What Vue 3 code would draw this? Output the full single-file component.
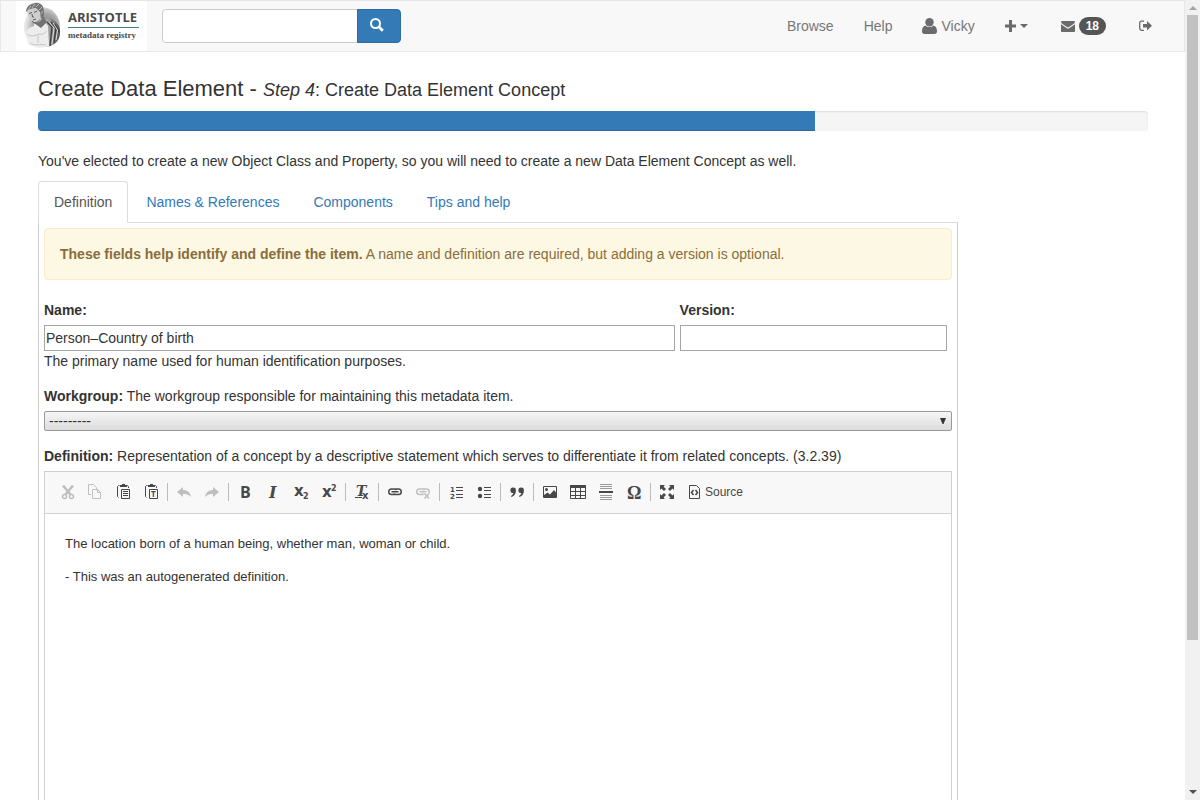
<script setup>
import { ref } from 'vue'

const query = ref('')
const name = ref('Person–Country of birth')
const version = ref('')
const workgroup = ref('')
const progress = 70

const tabs = ['Definition', 'Names & References', 'Components', 'Tips and help']
const activeTab = ref('Definition')

const glyph = (text, x, y, size, kind = 'sans') => `<text class="glyph ${kind}" x="${x}" y="${y}" font-size="${size}">${text}</text>`
const clip = '<path d="M4.500 1.500H3.500L2.500 2.500V12.500L3.500 13.500M11.500 1.500H12.500L13.500 2.500V4" fill="none" stroke="currentColor"/><path d="M5 1h2V0h3v1h2v2H5z"/><path d="M6.500 5.500h8v9h-8z" fill="#f8f8f8" stroke="currentColor"/>'
const chain = '<g fill="none" stroke="currentColor" stroke-width="1.500"><path d="M7.500 10.500H4.500a2.500 2.500 0 0 1 0-5.500h3a2.500 2.500 0 0 1 2 1M8.500 5H11.500a2.500 2.500 0 0 1 0 5.500h-3a2.500 2.500 0 0 1-2-1M4.500 7.750h7"/></g>'

const groups = [
  [
    { label: 'Cut', off: true, svg: '<g fill="none" stroke="currentColor"><path d="M4 1.500L11.500 10.500M14 1.500L6.500 10.500" stroke-width="2.600"/><circle cx="5.500" cy="12.500" r="2" stroke-width="1.500"/><circle cx="12.500" cy="12.500" r="2" stroke-width="1.500"/></g>' },
    { label: 'Copy', off: true, svg: '<g fill="none" stroke="currentColor"><path d="M4 10.500H1.500V0.500H6.500L9.500 3.500V5"/><path d="M5.500 5.500H10.500L13.500 8.500V14.500H5.500ZM10.500 5.500V8.500H13.500"/></g>' },
    { label: 'Paste', svg: clip + '<path d="M8 7.500h5M8 9.500h5M8 11.500h5" stroke="currentColor"/>' },
    { label: 'Paste as plain text', svg: clip + glyph('T', 8, 13, 8) }
  ],
  [
    { label: 'Undo', off: true, svg: '<path d="M1 8L7 3V6C11 6 14.500 8.500 15 13C12.500 10.500 10 10 7 10V13Z"/>' },
    { label: 'Redo', off: true, svg: '<path d="M15 8L9 3V6C5 6 1.500 8.500 1 13C3.500 10.500 6 10 9 10V13Z"/>' }
  ],
  [
    { label: 'Bold', svg: glyph('B', 3, 14, 16) },
    { label: 'Italic', svg: glyph('I', 4, 14, 16, 'serif slanted') },
    { label: 'Subscript', svg: glyph('x', 1, 12, 15, 'wide') + glyph('2', 10, 15, 8, 'wide') },
    { label: 'Superscript', svg: glyph('x', 1, 13, 15, 'wide') + glyph('2', 10, 7, 8, 'wide') }
  ],
  [
    { label: 'Remove format', svg: glyph('T', 2, 12, 14, 'serif slanted') + '<path d="M1 13.500h7" stroke="currentColor"/>' + glyph('x', 8, 15, 10, 'wide') }
  ],
  [
    { label: 'Link', svg: chain },
    { label: 'Unlink', off: true, svg: chain + '<circle cx="12" cy="12" r="3.500" fill="#f8f8f8"/><path d="M9.500 9.500l4.500 5M14 9.500l-4.500 5" stroke="currentColor" stroke-width="1.700"/>' }
  ],
  [
    { label: 'Numbered list', svg: glyph('1', 2, 8, 7, 'wide') + glyph('2', 2, 15, 7, 'wide') + '<path d="M8 3.500h7M8 6.500h7M8 10.500h7M8 13.500h7" stroke="currentColor"/>' },
    { label: 'Bulleted list', svg: '<circle cx="4" cy="5" r="2.200"/><circle cx="4" cy="12" r="2.200"/><path d="M8 3.500h7M8 6.500h7M8 10.500h7M8 13.500h7" stroke="currentColor"/>' }
  ],
  [
    { label: 'Block quote', svg: '<path d="M4 3.500a2.800 2.800 0 0 1 2.900 3C6.900 9.500 5.500 12 2.500 13L2 12C3.500 11.200 4.200 10 4.300 9A2.750 2.750 0 0 1 4 3.500ZM12 3.500a2.800 2.800 0 0 1 2.900 3C14.900 9.500 13.500 12 10.500 13L10 12C11.500 11.200 12.200 10 12.300 9A2.750 2.750 0 0 1 12 3.500Z"/>' }
  ],
  [
    { label: 'Image', svg: '<path d="M1.500 2.500h13v11h-13z" fill="none" stroke="currentColor"/><circle cx="4.500" cy="5.500" r="1.500"/><path d="M2 13V11L5.500 8.500L8 10.500L12 6L14 8.500V13Z"/>' },
    { label: 'Table', svg: '<path d="M0 1h16v3H0z"/><path d="M.5 1.500h15v13H.5zM0 7.500h16M0 11.500h16M5.500 3v12M10.500 3v12" fill="none" stroke="currentColor"/>' },
    { label: 'Horizontal line', svg: '<path d="M2 .5h12M2 2.500h12M2 4.500h12M2 11.500h12M2 13.500h12M2 15.500h12" stroke="#9a9a9a"/><path d="M1 7h14v2H1z"/>' },
    { label: 'Special character', svg: glyph('Ω', 1, 15, 18, 'times') }
  ],
  [
    { label: 'Maximize', svg: '<path d="M1 1h5L4.500 2.500L7 5L5 7L2.500 4.500L1 6ZM15 1h-5l1.500 1.500L9 5l2 2l2.500-2.500L15 6ZM1 15h5l-1.500-1.500L7 11L5 9L2.500 11.500L1 10ZM15 15h-5l1.500-1.500L9 11l2-2l2.500 2.500L15 10Z"/>' },
    { label: 'Source', text: true, svg: '<path d="M2.500 1.500H9.500L12.500 4.500V14.500H2.500Z" fill="none" stroke="currentColor"/><path d="M6.500 6L4.500 8.500L6.500 11M8.500 6L10.500 8.500L8.500 11" fill="none" stroke="currentColor" stroke-width="1.600"/>' }
  ]
]
</script>

<template>
  <div class="window">
    <div class="page">
      <nav class="navbar">
        <a class="brand" href="#" aria-label="Aristotle metadata registry">
          <svg class="bust" viewBox="0 0 40 48" aria-hidden="true">
            <defs>
              <radialGradient id="halo" cx=".6" cy=".5" r=".55">
                <stop offset="0" stop-color="#777" />
                <stop offset=".6" stop-color="#a5a5a5" />
                <stop offset="1" stop-color="#e6e6e6" />
              </radialGradient>
              <linearGradient id="cloak" x1="0" x2="1">
                <stop offset="0" stop-color="#d0d0d0" />
                <stop offset=".5" stop-color="#8a8a8a" />
                <stop offset="1" stop-color="#505050" />
              </linearGradient>
            </defs>
            <ellipse cx="20" cy="25" rx="18" ry="20" fill="url(#halo)" />
            <path d="M22 18L29 16C35 20 39 25 38 31C38 39 32 44 24 45L21 34Z" fill="url(#cloak)" />
            <path d="M12 22L21 18L26 24L27 44C20 47 12 46 6 42L4 33C4 28 8 25 12 24Z" fill="#ededed" />
            <path d="M5 32C8 35 13 34 17 32C20 33 23 31 25 29M16 33L16 41M8 41C12 44 19 42 24 43" fill="none" stroke="#c4c4c4" stroke-width="1" />
            <path d="M25 20L30 25L28 44M29 20L34 26L32 41M33 22L37 30" fill="none" stroke="#3c3c3c" stroke-width="1.200" />
            <path d="M27 20L32 26L30 42M31 21L35.500 28L34 38" fill="none" stroke="#dcdcdc" stroke-width="1" />
            <path d="M12 21L21 14L25 20L19 26Z" fill="#727272" />
            <path d="M5 9C7 5 12 3 17 4L21 10L20 17L17 20C13 21.500 10 20.500 9 17L6 14Z" fill="#cfcfcf" />
            <path d="M4 10C4 5 7 2 13 1C19 0 21.500 4 22 9C22.500 13 21.500 16 19 17L18 10L14 6C10 6 7 7 4 10Z" fill="#747474" />
            <path d="M6 8L9 4M10 6L13 2M14 5L17 2M17 8L20 5M19 12L21 9" stroke="#b8b8b8" stroke-width="1" />
            <path d="M7 11.500L10 10.500M12 10.500L15 9M10 12L10.500 15L12 15M11 18L14 17M10 19.500C13 21.500 16 20.500 18 17.500" fill="none" stroke="#5a5a5a" stroke-width="1" />
          </svg>
          <span class="wordmark">
            <span class="wordmark-top">ARISTOTLE</span>
            <span class="wordmark-sub">metadata registry</span>
          </span>
        </a>
        <form class="search" role="search" @submit.prevent>
          <input v-model="query" type="text" aria-label="Search" />
          <button type="submit" aria-label="Search">
            <svg width="14" height="14" viewBox="0 0 14 14"><circle cx="5.500" cy="5.500" r="4.500" fill="none" stroke="#fff" stroke-width="2" /><path d="M8.800 8.800L12.800 12.800" stroke="#fff" stroke-width="2.800" /></svg>
          </button>
        </form>
        <div class="links">
          <a href="#">Browse</a>
          <a href="#">Help</a>
          <a href="#">
            <svg width="15" height="16" viewBox="0 0 15 16"><circle cx="7.500" cy="4.200" r="4.200" /><path d="M3.500 7.500C1 8 0 10.500 0 13.200C0 15 1 16 2.500 16H12.500C14 16 15 15 15 13.200C15 10.500 14 8 11.500 7.500C9.500 9.600 5.500 9.600 3.500 7.500Z" /></svg>
            Vicky
          </a>
          <a href="#" aria-label="Create">
            <svg width="11" height="12" viewBox="0 0 11 12"><path d="M4 0h3v4.500h4v3H7V12H4V7.500H0v-3h4z" /></svg>
            <svg width="8" height="4" viewBox="0 0 8 4"><path d="M0 0h8L4 4z" /></svg>
          </a>
          <a href="#" class="inbox" aria-label="Messages: 18">
            <svg width="14" height="11" viewBox="0 0 14 11"><path d="M0 1Q0 0 1 0H13Q14 0 14 1Q14 2 12.500 3L8 6Q7 6.700 6 6L1.500 3Q0 2 0 1Z" /><path d="M0 3.200L5.500 7Q7 8 8.500 7L14 3.200V10Q14 11 13 11H1Q0 11 0 10Z" /></svg>
            <span class="badge">18</span>
          </a>
          <a href="#" aria-label="Log out">
            <svg width="13" height="12" viewBox="0 0 13 12"><path d="M5 1.200H2.500Q.7 1.200.7 3V8.500Q.7 10.300 2.500 10.300H5" fill="none" stroke="currentColor" stroke-width="1.300" /><path d="M4 4h4V1L13 5.700L8 10.500V7.500H4Z" /></svg>
          </a>
        </div>
      </nav>

      <main class="content">
        <h1>Create Data Element - <small><em>Step 4</em>: Create Data Element Concept</small></h1>
        <div class="progress" role="progressbar" :aria-valuenow="progress" aria-valuemin="0" aria-valuemax="100">
          <div class="bar" :style="{ width: progress + '%' }"></div>
        </div>
        <p class="intro">You've elected to create a new Object Class and Property, so you will need to create a new Data Element Concept as well.</p>

        <div class="row">
          <div class="column">
            <div class="tabs">
              <a v-for="tab in tabs" :key="tab" href="#" :class="{ active: tab === activeTab }" @click.prevent="activeTab = tab">{{ tab }}</a>
            </div>
            <div class="pane">
              <div class="alert"><strong>These fields help identify and define the item.</strong> A name and definition are required, but adding a version is optional.</div>

              <div class="fields">
                <div class="field">
                  <label for="name">Name:</label>
                  <input id="name" v-model="name" type="text" />
                  <span>The primary name used for human identification purposes.</span>
                </div>
                <div class="field">
                  <label for="version">Version:</label>
                  <input id="version" v-model="version" type="text" />
                </div>
              </div>

              <div class="group">
                <div class="caption"><label for="workgroup">Workgroup:</label> The workgroup responsible for maintaining this metadata item.</div>
                <div class="select">
                  <select id="workgroup" v-model="workgroup">
                    <option value="">---------</option>
                  </select>
                  <svg width="6" height="7" viewBox="0 0 6 7"><path d="M0 0h6L3.500 6h-1z" /></svg>
                </div>
              </div>

              <div class="group">
                <div class="caption"><label id="definition-label">Definition:</label> Representation of a concept by a descriptive statement which serves to differentiate it from related concepts. (3.2.39)</div>
                <div class="editor">
                  <div class="toolbar">
                    <div v-for="(group, i) in groups" :key="i" class="tool-group">
                      <button v-for="tool in group" :key="tool.label" type="button" :aria-label="tool.label" :class="{ off: tool.off }" :disabled="tool.off">
                        <svg width="16" height="16" viewBox="0 0 16 16" aria-hidden="true" v-html="tool.svg"></svg>
                        <span v-if="tool.text">{{ tool.label }}</span>
                      </button>
                    </div>
                  </div>
                  <div class="document" contenteditable="true" role="textbox" aria-multiline="true" aria-labelledby="definition-label">
                    <p>The location born of a human being, whether man, woman or child.</p>
                    <p>- This was an autogenerated definition.</p>
                  </div>
                </div>
              </div>
            </div>
          </div>
        </div>
      </main>
    </div>
    <div class="scrollbar" aria-hidden="true">
      <svg width="8" height="4" viewBox="0 0 8 4"><path d="M4 0L8 4H0z" fill="#a3a3a3" /></svg>
      <div class="track"><div class="thumb"></div></div>
      <svg width="8" height="4" viewBox="0 0 8 4"><path d="M0 0h8L4 4z" fill="#505050" /></svg>
    </div>
  </div>
</template>

<style>
body {
  margin: 0;
  background: #fff;
}
</style>

<style scoped>
* {
  box-sizing: border-box;
}
.window {
  display: flex;
  height: 100vh;
  overflow: hidden;
  font: 14px/20px "Liberation Sans", Arial, sans-serif;
  color: #333;
}
.page {
  flex: 1;
  min-width: 0;
  overflow: hidden;
}
a {
  color: #337ab7;
  text-decoration: none;
}
svg {
  display: block;
  flex: none;
  fill: currentColor;
}
input, button, select {
  font: inherit;
  color: inherit;
  margin: 0;
}
.navbar {
  display: flex;
  align-items: center;
  height: 52px;
  padding: 0 17px 0 15px;
  border: 1px solid #e7e7e7;
  background: #f8f8f8;
}
.brand {
  display: flex;
  align-items: center;
  gap: 6px;
  height: 50px;
  padding: 0 8px 0 6px;
  background: #fff;
  color: #4a4a4a;
}
.bust {
  width: 40px;
  height: 48px;
}
.wordmark {
  display: flex;
  flex-direction: column;
  width: 71px;
}
.wordmark-top {
  border-bottom: 1px solid #3f7f78;
  padding-bottom: 1px;
  font: bold 13px/17px "Open Sans", sans-serif;
}
.wordmark-sub {
  font: bold 9px/15px "Liberation Serif", serif;
  white-space: nowrap;
}
.search {
  display: flex;
  margin-left: 15px;
}
.search input {
  width: 196px;
  height: 34px;
  padding: 6px 12px;
  border: 1px solid #ccc;
  border-radius: 4px 0 0 4px;
  background: #fff;
}
.search button {
  display: flex;
  align-items: flex-start;
  width: 44px;
  height: 34px;
  margin-left: -1px;
  padding: 8px 12px;
  border: 1px solid #2e6da4;
  border-radius: 0 4px 4px 0;
  background: #337ab7;
}
.links {
  display: flex;
  margin-left: auto;
}
.links a {
  display: flex;
  align-items: center;
  gap: 4px;
  height: 50px;
  padding: 0 15px;
  color: #777;
}
.links svg {
  color: #6b6b6b;
}
.links .inbox {
  padding: 0 18px;
}
.badge {
  padding: 3px 7px;
  border-radius: 10px;
  background: #555;
  color: #fff;
  font-size: 12px;
  font-weight: bold;
  line-height: 12px;
}
.content {
  padding: 24px 37px 0 38px;
}
h1 {
  margin: 0 0 8px;
  font-size: 22px;
  font-weight: normal;
  line-height: 26px;
}
h1 small {
  font-size: 18px;
}
.progress {
  height: 20px;
  border-radius: 4px;
  overflow: hidden;
  background: #f5f5f5;
  box-shadow: inset 0 1px 2px rgba(0, 0, 0, .1);
}
.bar {
  height: 100%;
  background: #337ab7;
  box-shadow: inset 0 -1px 0 rgba(0, 0, 0, .15);
}
.intro {
  margin: 20px 0 10px;
}
.row {
  margin: 0 -15px;
}
.column {
  width: 83.3333%;
  padding: 0 15px;
}
.tabs {
  display: flex;
  gap: 2px;
  border-bottom: 1px solid #ddd;
}
.tabs a {
  margin-bottom: -1px;
  padding: 10px 15px;
  border: 1px solid transparent;
  border-radius: 4px 4px 0 0;
}
.tabs .active {
  border-color: #ddd;
  border-bottom-color: #fff;
  background: #fff;
  color: #555;
}
.pane {
  padding: 5px;
  border: 1px solid #ccc;
  border-width: 0 1px;
}
.alert {
  margin-bottom: 20px;
  padding: 15px;
  border: 1px solid #faebcc;
  border-radius: 4px;
  background: #fcf8e3;
  color: #8a6d3b;
}
label {
  font-weight: bold;
}
.fields {
  display: grid;
  grid-template-columns: 7fr 3fr;
}
.field {
  display: flex;
  flex-direction: column;
  padding-right: 5px;
}
.field label,
.caption {
  margin-bottom: 5px;
}
.field input {
  width: 100%;
  height: 26px;
  padding: 1px;
  border: 1px solid #a6a6a6;
  background: #fff;
}
.group {
  margin-top: 15px;
}
.select {
  position: relative;
}
.select select {
  display: block;
  width: 100%;
  height: 20px;
  padding: 0 4px;
  appearance: none;
  border: 1px solid #999;
  border-radius: 2px;
  background: linear-gradient(#f6f6f6, #dcdcdc);
  line-height: 18px;
}
.select svg {
  position: absolute;
  top: 7px;
  right: 6px;
  pointer-events: none;
}
.editor {
  border: 1px solid #d1d1d1;
}
.toolbar {
  display: flex;
  align-items: flex-start;
  height: 42px;
  padding: 6px 8px;
  border-bottom: 1px solid #d1d1d1;
  background: #f8f8f8;
}
.tool-group {
  display: flex;
  align-items: center;
}
.tool-group + .tool-group::before {
  content: "";
  width: 1px;
  height: 18px;
  margin: 0 2px;
  background: #bcbcbc;
}
.toolbar button {
  display: flex;
  align-items: center;
  gap: 2px;
  height: 28px;
  padding: 0 6px;
  border: 0;
  background: none;
  color: #484848;
  font-size: 12px;
}
.toolbar svg {
  overflow: visible;
}
.toolbar .off {
  color: #bfbfbf;
}
.toolbar :deep(.glyph) {
  font-weight: bold;
}
.toolbar :deep(.sans) {
  font-family: "Open Sans", sans-serif;
}
.toolbar :deep(.wide) {
  font-family: "DejaVu Sans", sans-serif;
}
.toolbar :deep(.serif) {
  font-family: "DejaVu Serif", serif;
}
.toolbar :deep(.times) {
  font-family: "Liberation Serif", serif;
}
.toolbar :deep(.slanted) {
  font-style: italic;
}
.document {
  height: 400px;
  padding: 20px;
  outline: none;
  font-size: 13px;
}
.document p {
  margin: 0 0 13px;
}
.scrollbar {
  display: flex;
  flex-direction: column;
  align-items: center;
  width: 15px;
  padding: 6px 0;
  background: #f1f1f1;
}
.track {
  flex: 1;
  width: 11px;
  margin: 5px 0;
}
.thumb {
  height: 81.2%;
  background: #c1c1c1;
}
</style>
